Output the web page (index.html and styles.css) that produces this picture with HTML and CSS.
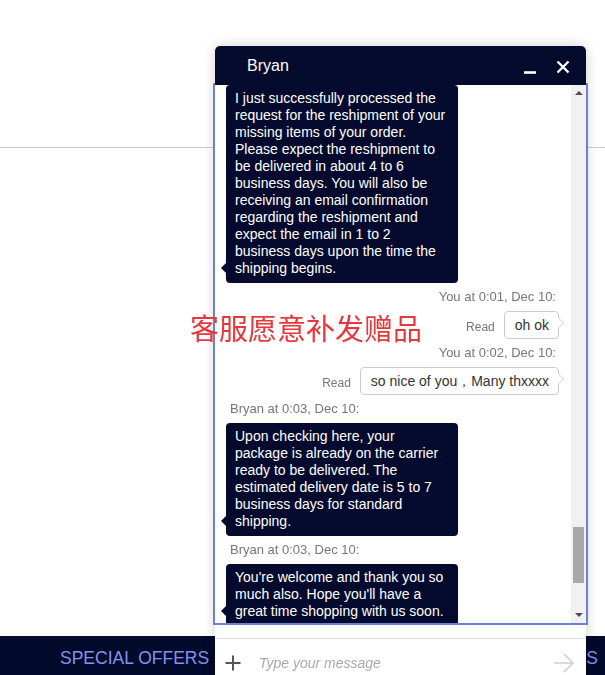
FILE: index.html
```html
<!DOCTYPE html>
<html lang="en">
<head>
    <meta charset="UTF-8">
    <meta name="viewport" content="width=device-width, initial-scale=1.0">
    <title>Chat with Bryan</title>
    <link rel="stylesheet" href="styles.css">
</head>
<body>

<!-- Store page behind the chat -->
<div class="site">
    <div class="site-header"></div>
    <div class="site-main"></div>
    <div class="site-nav">
        <a class="nav-link" href="#">SPECIAL OFFERS</a>
        <a class="nav-link" href="#">BEST SELLERS</a>
    </div>
</div>

<!-- Annotation on the screenshot -->
<div class="note">客服愿意补发赠品</div>

<!-- Chat window -->
<div class="chat">
    <div class="chat-head">
        <span class="chat-name">Bryan</span>
        <div class="chat-actions">
            <svg width="14" height="14" viewBox="0 0 14 14"><path d="M1 12.5h12" stroke="#fff" stroke-width="2.6"/></svg>
            <svg width="14" height="14" viewBox="0 0 14 14"><path d="M1.5 1.5l11 11M12.5 1.5l-11 11" stroke="#fff" stroke-width="2.4"/></svg>
        </div>
    </div>

    <div class="chat-body">
        <div class="thread">
            <div class="msg agent">
                <div class="bubble">I just successfully processed the request for the reshipment of your missing items of your order. Please expect the reshipment to be delivered in about 4 to 6 business days. You will also be receiving an email confirmation regarding the reshipment and expect the email in 1 to 2 business days upon the time the shipping begins.</div>
            </div>
            <div class="msg mine">
                <div class="stamp">You at 0:01, Dec 10:</div>
                <div class="row"><span class="read">Read</span><div class="bubble">oh ok</div></div>
            </div>
            <div class="msg mine">
                <div class="stamp">You at 0:02, Dec 10:</div>
                <div class="row"><span class="read">Read</span><div class="bubble">so nice of you，Many thxxxx</div></div>
            </div>
            <div class="msg agent">
                <div class="stamp">Bryan at 0:03, Dec 10:</div>
                <div class="bubble">Upon checking here, your package is already on the carrier ready to be delivered. The estimated delivery date is 5 to 7 business days for standard shipping.</div>
            </div>
            <div class="msg agent">
                <div class="stamp">Bryan at 0:03, Dec 10:</div>
                <div class="bubble">You're welcome and thank you so much also. Hope you'll have a great time shopping with us soon.</div>
            </div>
        </div>
        <div class="scrollbar">
            <span class="arrow up"></span>
            <div class="track"><div class="thumb"></div></div>
            <span class="arrow down"></span>
        </div>
    </div>

    <div class="chat-foot">
        <div class="compose">
            <svg width="16" height="16" viewBox="0 0 16 16"><path d="M8 0.5v15M0.5 8h15" stroke="#555" stroke-width="2"/></svg>
            <span class="placeholder">Type your message</span>
            <svg class="send" width="22" height="20" viewBox="0 0 22 20"><path d="M1 10h19M11 1l9 9-9 9" fill="none" stroke="#cfcfcf" stroke-width="1.6"/></svg>
        </div>
    </div>
</div>

</body>
</html>
```

FILE: styles.css
```css
body {
    font-family: "Liberation Sans", Arial, sans-serif;
    margin: 0;
    padding: 0;
    background-color: #fff;
    overflow: hidden;
}

/* Store page */
.site {
    display: flex;
    flex-direction: column;
    height: 100vh;
}
.site-header {
    height: 147px;
    border-bottom: 1px solid #cccccc;
}
.site-main {
    flex: 1;
}
.site-nav {
    height: 39px;
    background-color: #020a2b;
    display: flex;
    align-items: center;
    justify-content: space-between;
    padding: 0 7px 0 60px;
}
.nav-link {
    color: #8193ea;
    font-size: 17.5px;
    text-decoration: none;
    padding-top: 6px;
}

.note {
    position: absolute;
    left: 190px;
    top: 310px;
    font-family: "Noto Sans CJK SC", sans-serif;
    font-size: 29px;
    line-height: 34px;
    color: #e8373c;
    z-index: 5;
}

/* Chat window */
.chat {
    position: fixed;
    left: 215px;
    top: 46px;
    width: 371px;
    height: 640px;
    display: flex;
    flex-direction: column;
    background: #fff;
    border-radius: 5px 5px 0 0;
    box-shadow: 0 0 14px rgba(0, 0, 0, 0.18);
}
.chat-head {
    position: relative;
    z-index: 2;
    height: 39px;
    flex-shrink: 0;
    background-color: #030a2c;
    border-radius: 5px 5px 0 0;
    display: flex;
    align-items: center;
    justify-content: space-between;
    padding: 0 16px 0 32px;
}
.chat-name {
    color: #fff;
    font-size: 16px;
}
.chat-actions {
    display: flex;
    gap: 19px;
    padding-top: 2px;
}

.chat-body {
    height: 538px;
    flex-shrink: 0;
    display: flex;
    outline: 2px solid #6c80d5;
}
.thread {
    flex: 1;
    overflow: hidden;
    padding: 0 12px 0 11px;
}
.msg {
    display: flex;
    flex-direction: column;
    margin-bottom: 6px;
}
.stamp {
    font-size: 13px;
    line-height: 15px;
    color: #777;
    margin: 0 3px 7px 4px;
}
.bubble {
    position: relative;
    font-size: 14px;
    line-height: 17px;
    border-radius: 4px;
}
.agent .bubble {
    width: 212px;
    padding: 5px 11px 6px 9px;
    background-color: #040a2d;
    color: #fff;
}
.agent .bubble::before {
    content: "";
    position: absolute;
    left: -5px;
    bottom: 10px;
    border-top: 5px solid transparent;
    border-bottom: 5px solid transparent;
    border-right: 5px solid #040a2d;
}
.mine {
    align-items: flex-end;
}
.row {
    display: flex;
    align-items: center;
    gap: 9px;
}
.read {
    font-size: 12px;
    color: #777;
    padding-top: 3px;
}
.mine .bubble {
    line-height: 16px;
    padding: 5px 9px 5px 10px;
    border: 1px solid #cccccc;
    color: #333;
    background: #fff;
}
.mine .bubble::before,
.mine .bubble::after {
    content: "";
    position: absolute;
    top: 6px;
    border-top: 5px solid transparent;
    border-bottom: 5px solid transparent;
}
.mine .bubble::before {
    right: -6px;
    border-left: 5px solid #cccccc;
}
.mine .bubble::after {
    right: -5px;
    border-left: 5px solid #fff;
}

/* fake scrollbar, content is scrolled near the end */
.scrollbar {
    width: 15px;
    background: #f1f1f1;
    display: flex;
    flex-direction: column;
    align-items: center;
}
.track {
    flex: 1;
    width: 100%;
    position: relative;
}
.thumb {
    position: absolute;
    left: 2px;
    right: 2px;
    top: 426px;
    height: 56px;
    background: #a8a8a8;
}
.arrow {
    width: 0;
    height: 0;
    border-left: 4px solid transparent;
    border-right: 4px solid transparent;
    margin: 6px 0;
}
.arrow.up {
    border-bottom: 4px solid #505050;
}
.arrow.down {
    border-top: 4px solid #505050;
}

.chat-foot {
    flex: 1;
    padding-top: 15px;
}
.compose {
    border-top: 1px solid #dddddd;
    display: flex;
    align-items: center;
    padding: 14px 11px 0 10px;
}
.placeholder {
    flex: 1;
    margin-left: 18px;
    font-size: 14px;
    font-style: italic;
    color: #aaaaaa;
}
```
